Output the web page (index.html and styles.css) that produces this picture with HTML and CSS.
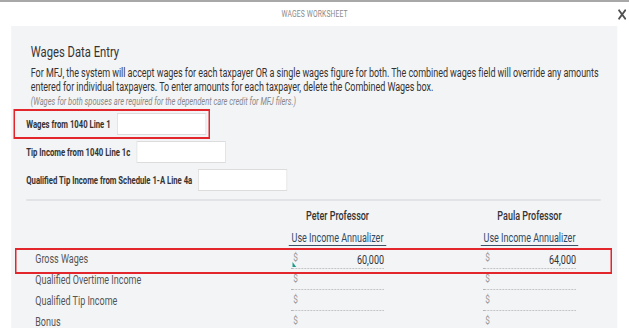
FILE: index.html
```html
<!DOCTYPE html>
<html lang="en">
<head>
  <meta charset="UTF-8" />
  <title>Wages Worksheet</title>
  <link rel="stylesheet" href="styles.css">
</head>
<body>
  <div class="viewport">
  <div class="page">
    <div class="topbar">
      <span></span>
      <h1>Wages Worksheet</h1>
      <button class="close" aria-label="Close">
        <svg width="11" height="11" viewBox="0 0 11 11"><path d="M1.5 1.5l8 8M9.5 1.5l-8 8" stroke="#505050" stroke-width="2.2" stroke-linecap="square"/></svg>
      </button>
    </div>

    <div class="panel">
      <div class="intro">
        <h2>Wages Data Entry</h2>
        <p>For MFJ, the system will accept wages for each taxpayer OR a single wages figure for both. The combined wages field will override any amounts entered for individual taxpayers. To enter amounts for each taxpayer, delete the Combined Wages box.</p>
        <p class="note">(Wages for both spouses are required for the dependent care credit for MFJ filers.)</p>
      </div>

      <div class="fields">
        <div class="field hl">
          <label for="w1">Wages from 1040 Line 1</label>
          <input type="text" id="w1" />
        </div>
        <div class="field">
          <label for="w2">Tip Income from 1040 Line 1c</label>
          <input type="text" id="w2" />
        </div>
        <div class="field">
          <label for="w3">Qualified Tip Income from Schedule 1-A Line 4a</label>
          <input type="text" id="w3" />
        </div>
      </div>

      <hr class="divider" />

      <div class="grid head">
        <span></span>
        <div class="name">Peter Professor</div>
        <div class="name">Paula Professor</div>
      </div>
      <div class="grid links">
        <span></span>
        <a href="#">Use Income Annualizer</a>
        <a href="#">Use Income Annualizer</a>
      </div>

      <div class="rows">
        <div class="grid row hl">
          <div class="lbl">Gross Wages</div>
          <div class="money"><span class="cur">$</span><span class="val">60,000</span><i class="flag"></i></div>
          <div class="money"><span class="cur">$</span><span class="val">64,000</span></div>
        </div>
        <div class="grid row">
          <div class="lbl">Qualified Overtime Income</div>
          <div class="money"><span class="cur">$</span><span class="val"></span></div>
          <div class="money"><span class="cur">$</span><span class="val"></span></div>
        </div>
        <div class="grid row">
          <div class="lbl">Qualified Tip Income</div>
          <div class="money"><span class="cur">$</span><span class="val"></span></div>
          <div class="money"><span class="cur">$</span><span class="val"></span></div>
        </div>
        <div class="grid row">
          <div class="lbl">Bonus</div>
          <div class="money"><span class="cur">$</span><span class="val"></span></div>
          <div class="money"><span class="cur">$</span><span class="val"></span></div>
        </div>
      </div>
    </div>
  </div>
  </div>
</body>
</html>
```

FILE: styles.css
```css
html, body {
  margin: 0;
  background: #fff;
  overflow: hidden;
}
body {
  font-family: Roboto, "Noto Sans", Arial, sans-serif;
  color: #333;
}
.viewport {
  width: 629px;
  height: 328px;
  overflow: hidden;
}
/* the screenshot is squeezed horizontally */
.page {
  width: 839px;
  transform: scaleX(0.75);
  transform-origin: 0 0;
}
.topbar {
  border-top: 2px solid #a8a8a8;
  height: 24px;
  display: grid;
  grid-template-columns: 1fr auto 1fr;
  align-items: center;
}
.topbar h1 {
  margin: 0;
  font-size: 9px;
  font-weight: 400;
  color: #8a8a8a;
  text-transform: uppercase;
  letter-spacing: 0.2px;
}
.close {
  justify-self: end;
  margin-right: 4px;
  background: none;
  border: none;
  padding: 0;
  display: flex;
  cursor: pointer;
}
.panel {
  background: #f3f4f6;
  margin: 0 16px 0 15px;
  padding: 16px 22px 20px 20px;
}
.intro {
  padding-left: 6px;
  margin-right: -8px;
}
h2 {
  margin: 0;
  font-size: 15px;
  line-height: 20px;
  font-weight: 400;
  color: #333;
}
.intro p {
  margin: 5px 0 0;
  font-size: 12px;
  line-height: 13.5px;
  letter-spacing: -0.05px;
}
.intro p.note {
  margin-top: 1px;
  font-size: 10px;
  line-height: 13px;
  font-style: italic;
  color: #888;
  letter-spacing: 0;
}
.fields {
  margin-top: 5px;
  display: flex;
  flex-direction: column;
  align-items: flex-start;
  gap: 6px;
}
.field {
  display: flex;
  align-items: center;
  gap: 8px;
  padding: 0 1px 0 13px;
  margin-left: -13px;
}
.field label {
  font-size: 10.3px;
  font-weight: 700;
  color: #333;
  white-space: nowrap;
}
.field input {
  flex: 0 0 119px;
  width: 119px;
  height: 22px;
  box-sizing: border-box;
  border: 1px solid #dcdcdc;
  background: #fff;
}
.hl {
  outline: 2px solid #e3262b;
  outline-offset: 2px;
}
.divider {
  margin: 8px 0 0;
  border: none;
  border-top: 2px solid #e1e3e6;
}
.grid {
  display: grid;
  grid-template-columns: 1fr 130px 130px;
  column-gap: 126px;
  padding-right: 30px;
}
.head {
  margin-top: 7px;
}
.name {
  text-align: center;
  font-size: 12px;
  line-height: 16px;
  font-weight: 500;
  color: #333;
}
.links {
  margin-top: 7px;
}
.links a {
  text-align: center;
  font-size: 12px;
  line-height: 14px;
  color: #2e4a62;
  text-decoration: none;
  border-bottom: 1px solid #3a5368;
}
.rows {
  margin: 3px -14px 0;
}
.row {
  height: 21px;
  padding: 0 44px 0 26px;
  align-items: start;
}
.row.hl {
  outline-offset: -1px;
  padding-bottom: 3px;
  margin-bottom: -3px;
  position: relative;
  z-index: 1;
}
.lbl {
  font-size: 12px;
  line-height: 21px;
  color: #555;
}
.money {
  position: relative;
  width: 124px;
  height: 20px;
  margin-left: 3px;
  border-bottom: 1px dotted #b5b5b5;
  display: flex;
  align-items: flex-start;
  padding: 3px 0 0 3px;
  box-sizing: border-box;
}
.cur {
  font-size: 11px;
  line-height: 12px;
  color: #9a9a9a;
}
.val {
  flex: 1;
  text-align: right;
  font-size: 12px;
  line-height: 16px;
  color: #333;
}
.flag {
  position: absolute;
  left: 2px;
  bottom: 1px;
  width: 0;
  height: 0;
  border-left: 5px solid #1e9c8a;
  border-top: 5px solid transparent;
}
```
